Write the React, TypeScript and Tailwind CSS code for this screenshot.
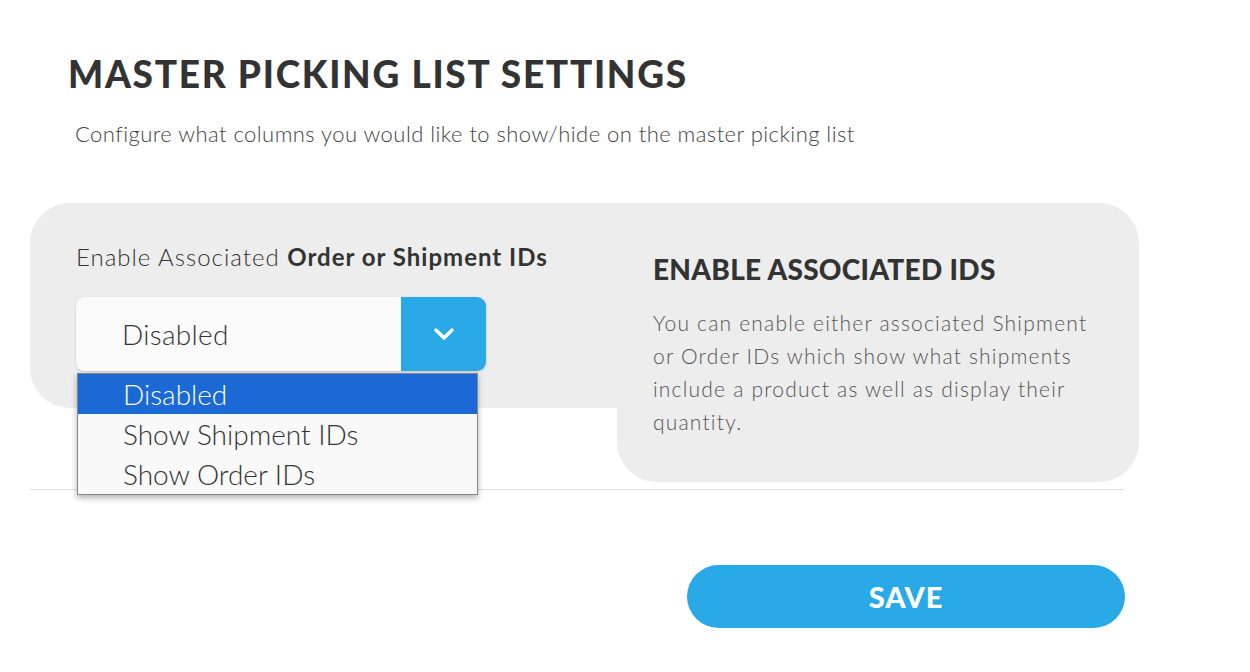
import React from "react";

export default function App() {
  const font = { fontFamily: "Lato, 'Open Sans', 'DejaVu Sans', sans-serif" };
  return (
    <div className="w-[1250px] h-[672px] bg-white text-[#333] relative overflow-hidden" style={font}>
      <div className="pt-[52px] pl-[68px]">
        <h1 className="text-[37px] leading-[44px] font-black text-[#333] tracking-[1.7px]">MASTER PICKING LIST SETTINGS</h1>
        <p className="mt-[24px] ml-[7px] text-[22px] leading-[28px] font-light text-[#444] tracking-[0.45px]">
          Configure what columns you would like to show/hide on the master picking list
        </p>
      </div>

      <div className="mt-[55px] ml-[30px] w-[1109px] flex items-start">
        <div className="w-[587px] h-[205px] bg-[#ededed] rounded-l-[40px] pt-[38px] pl-[46px]">
          <div className="text-[24px] leading-[32px] font-light text-[#333] tracking-[1px] whitespace-nowrap">
            Enable Associated <span className="font-bold">Order or Shipment IDs</span>
          </div>
          <div className="relative mt-[24px] w-[410px]">
            <div className="flex h-[74px] rounded-[9px] shadow-[0_1px_3px_rgba(0,0,0,0.15)] overflow-hidden">
              <div className="flex-1 bg-[#fafafa] flex items-center pl-[46px] text-[28px] font-light text-[#333] tracking-[0.3px]">
                Disabled
              </div>
              <div className="w-[85px] bg-[#29a9e5] flex items-center justify-center">
                <svg width="22" height="14" viewBox="0 0 22 14">
                  <path d="M3 3 L11 11 L19 3" fill="none" stroke="white" strokeWidth="3.5" strokeLinecap="round" strokeLinejoin="round" />
                </svg>
              </div>
            </div>
            <div className="absolute left-[1px] top-[76px] w-[401px] bg-[#f9f9f9] border border-[#888] shadow-[0_3px_6px_rgba(0,0,0,0.3)] z-10">
              <div className="h-[40px] bg-[#1a69d4] text-white flex items-center pl-[45px] text-[28px] font-light">Disabled</div>
              <div className="h-[40px] flex items-center pl-[45px] text-[28px] font-light text-[#333]">Show Shipment IDs</div>
              <div className="h-[40px] flex items-center pl-[45px] text-[28px] font-light text-[#333]">Show Order IDs</div>
            </div>
          </div>
        </div>
        <div className="w-[522px] h-[279px] bg-[#ededed] rounded-tr-[40px] rounded-br-[40px] rounded-bl-[40px] pt-[49px] pl-[36px] pr-[40px]">
          <h2 className="text-[28px] leading-[34px] font-black text-[#333] tracking-[0.3px]">ENABLE ASSOCIATED IDS</h2>
          <p className="mt-[20px] text-[21px] leading-[33px] font-light text-[#555] w-[440px] tracking-[1.2px]">
            You can enable either associated Shipment or Order IDs which show what shipments include a product as well as display their quantity.
          </p>
        </div>
      </div>

      <div className="ml-[30px] mt-[7px] w-[1094px] h-px bg-[#e0e0e0]" />

      <div className="flex justify-end w-[1125px] mt-[75px]">
        <button className="w-[438px] h-[63px] rounded-full bg-[#29a9e5] text-white text-[29px] font-black tracking-[0.8px]">
          SAVE
        </button>
      </div>
    </div>
  );
}
